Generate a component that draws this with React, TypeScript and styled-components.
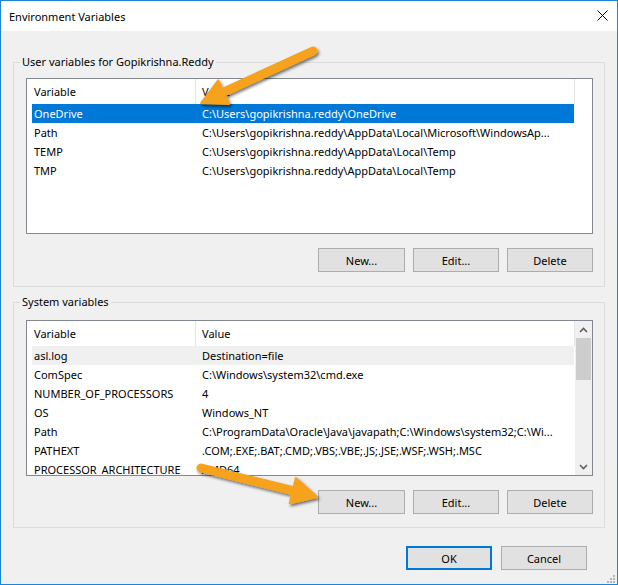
import React from "react";
import styled, { createGlobalStyle } from "styled-components";

const GlobalStyle = createGlobalStyle`
  html, body { margin: 0; padding: 0; background: #ffffff; }
  body { font-family: "Noto Sans", "Open Sans", sans-serif; font-size: 11px; color: #000; }
  * { box-sizing: border-box; }
`;

const Window = styled.div`
  position: relative;
  width: 618px;
  height: 585px;
  border: 1px solid #1c84d6;
  background: #f0f0f0;
  display: flex;
  flex-direction: column;
  overflow: hidden;
`;

const TitleBar = styled.div`
  height: 30px;
  flex-shrink: 0;
  background: #ffffff;
  display: flex;
  align-items: center;
  justify-content: space-between;
  padding: 0 9px 0 8px;
`;

const Title = styled.span`
  font-size: 11px;
  line-height: 16px;
  padding-top: 1px;
`;

const CloseIcon = styled.svg`
  width: 11px;
  height: 11px;
  margin-top: -1px;
`;

const Body = styled.div`
  flex: 1;
  display: flex;
  flex-direction: column;
  padding: 31px 12px 0 12px;
`;

const Group = styled.section<{ $mt: number; $pb: number }>`
  margin-top: ${(p) => p.$mt}px;
  border: 1px solid #dcdcdc;
  padding: 0 11px ${(p) => p.$pb}px 12px;
  display: flex;
  flex-direction: column;
`;

const Legend = styled.span`
  align-self: flex-start;
  margin: -9px 0 0 -6px;
  padding: 0 2px;
  height: 16px;
  line-height: 16px;
  background: #f0f0f0;
`;

const ListBox = styled.div<{ $mt: number; $h: number }>`
  margin-top: ${(p) => p.$mt}px;
  height: ${(p) => p.$h}px;
  border: 1px solid #828790;
  background: #ffffff;
  display: flex;
  overflow: hidden;
`;

const Table = styled.div`
  flex: 1;
  min-width: 0;
  padding-left: 5px;
  display: flex;
  flex-direction: column;
  overflow: hidden;
`;

const HeaderRow = styled.div`
  display: flex;
  height: 25px;
  flex-shrink: 0;
  border-right: 1px solid #e5e5e5;
`;

const HeaderCell = styled.div<{ $first?: boolean }>`
  display: flex;
  align-items: center;
  padding-left: ${(p) => (p.$first ? 2 : 6)}px;
  ${(p) =>
    p.$first
      ? `width: 164px; flex-shrink: 0; border-right: 1px solid #e5e5e5;`
      : `flex: 1;`}
`;

type RowState = "selected" | "inactive" | "normal";

const Row = styled.div<{ $state: RowState }>`
  display: flex;
  height: 19px;
  line-height: 19px;
  flex-shrink: 0;
  margin-right: 1px;
  background: ${(p) =>
    p.$state === "selected" ? "#0078d7" : p.$state === "inactive" ? "#f0f0f0" : "transparent"};
  color: ${(p) => (p.$state === "selected" ? "#ffffff" : "#000000")};
`;

const Cell = styled.div<{ $first?: boolean }>`
  white-space: nowrap;
  overflow: hidden;
  padding-left: ${(p) => (p.$first ? 2 : 6)}px;
  ${(p) => (p.$first ? `width: 164px; flex-shrink: 0;` : `flex: 1; min-width: 0;`)}
`;

const ScrollCol = styled.div<{ $visible: boolean }>`
  width: 17px;
  flex-shrink: 0;
  display: flex;
  flex-direction: column;
  background: ${(p) => (p.$visible ? "#f0f0f0" : "#ffffff")};
`;

const ScrollArrow = styled.div`
  height: 17px;
  flex-shrink: 0;
  display: flex;
  align-items: center;
  justify-content: center;
`;

const Track = styled.div`
  flex: 1;
`;

const Thumb = styled.div`
  height: 42px;
  margin: 0 1px;
  background: #cdcdcd;
`;

const ButtonRow = styled.div<{ $mt: number }>`
  margin-top: ${(p) => p.$mt}px;
  display: flex;
  justify-content: flex-end;
  gap: 8px;
`;

const Button = styled.button<{ $default?: boolean; $w?: number }>`
  width: ${(p) => p.$w ?? 86}px;
  height: 24px;
  padding: 0;
  font-family: inherit;
  font-size: 11px;
  color: #000;
  background: #e1e1e1;
  border: ${(p) => (p.$default ? "2px solid #0078d7" : "1px solid #adadad")};
  border-radius: 0;
`;

const Footer = styled.div`
  margin-top: 18px;
  padding-right: 18px;
  display: flex;
  justify-content: flex-end;
  gap: 9px;
`;

const Grip = styled.svg`
  position: absolute;
  right: 2px;
  bottom: 1px;
  width: 9px;
  height: 9px;
`;

const Overlay = styled.svg`
  position: absolute;
  left: -1px;
  top: -1px;
  width: 618px;
  height: 585px;
  pointer-events: none;
`;

type Item = { name: string; value: string; state?: RowState };

const userVars: Item[] = [
  { name: "OneDrive", value: "C:\\Users\\gopikrishna.reddy\\OneDrive", state: "selected" },
  { name: "Path", value: "C:\\Users\\gopikrishna.reddy\\AppData\\Local\\Microsoft\\WindowsAp..." },
  { name: "TEMP", value: "C:\\Users\\gopikrishna.reddy\\AppData\\Local\\Temp" },
  { name: "TMP", value: "C:\\Users\\gopikrishna.reddy\\AppData\\Local\\Temp" },
];

const systemVars: Item[] = [
  { name: "asl.log", value: "Destination=file", state: "inactive" },
  { name: "ComSpec", value: "C:\\Windows\\system32\\cmd.exe" },
  { name: "NUMBER_OF_PROCESSORS", value: "4" },
  { name: "OS", value: "Windows_NT" },
  { name: "Path", value: "C:\\ProgramData\\Oracle\\Java\\javapath;C:\\Windows\\system32;C:\\Wi..." },
  { name: "PATHEXT", value: ".COM;.EXE;.BAT;.CMD;.VBS;.VBE;.JS;.JSE;.WSF;.WSH;.MSC" },
  { name: "PROCESSOR_ARCHITECTURE", value: "AMD64" },
];

const Chevron = ({ up }: { up: boolean }) => (
  <svg width="9" height="6" viewBox="0 0 9 6">
    <polyline
      points={up ? "1,5 4.5,1.5 8,5" : "1,1 4.5,4.5 8,1"}
      fill="none"
      stroke="#606060"
      strokeWidth="1.6"
    />
  </svg>
);

const VarList = ({ items, mt, h, scroll }: { items: Item[]; mt: number; h: number; scroll: boolean }) => (
  <ListBox $mt={mt} $h={h}>
    <Table>
      <HeaderRow>
        <HeaderCell $first>Variable</HeaderCell>
        <HeaderCell>Value</HeaderCell>
      </HeaderRow>
      {items.map((it) => (
        <Row key={it.name + it.value} $state={it.state ?? "normal"}>
          <Cell $first>{it.name}</Cell>
          <Cell>{it.value}</Cell>
        </Row>
      ))}
    </Table>
    <ScrollCol $visible={scroll}>
      {scroll && (
        <>
          <ScrollArrow>
            <Chevron up />
          </ScrollArrow>
          <Track>
            <Thumb />
          </Track>
          <ScrollArrow>
            <Chevron up={false} />
          </ScrollArrow>
        </>
      )}
    </ScrollCol>
  </ListBox>
);

const Arrow = ({ tail, base, tip, w1, w2 }: { tail: number[]; base: number[]; tip: number[]; w1: number[]; w2: number[] }) => (
  <g filter="url(#arrowShadow)">
    <line x1={tail[0]} y1={tail[1]} x2={base[0]} y2={base[1]} stroke="#f7a21b" strokeWidth="9" strokeLinecap="round" />
    <polygon points={`${tip[0]},${tip[1]} ${w1[0]},${w1[1]} ${w2[0]},${w2[1]}`} fill="#f7a21b" stroke="#f7a21b" strokeWidth="2" strokeLinejoin="round" />
  </g>
);

const ActionButtons = () => (
  <ButtonRow $mt={14}>
    <Button $w={87}>New...</Button>
    <Button>Edit...</Button>
    <Button>Delete</Button>
  </ButtonRow>
);

export default function App() {
  return (
    <>
      <GlobalStyle />
      <Window>
        <TitleBar>
          <Title>Environment Variables</Title>
          <CloseIcon viewBox="0 0 11 11">
            <line x1="0.5" y1="0.5" x2="10.5" y2="10.5" stroke="#000" strokeWidth="1" />
            <line x1="10.5" y1="0.5" x2="0.5" y2="10.5" stroke="#000" strokeWidth="1" />
          </CloseIcon>
        </TitleBar>
        <Body>
          <Group $mt={0} $pb={14}>
            <Legend>User variables for Gopikrishna.Reddy</Legend>
            <VarList items={userVars} mt={8} h={156} scroll={false} />
            <ActionButtons />
          </Group>
          <Group $mt={15} $pb={13}>
            <Legend>System variables</Legend>
            <VarList items={systemVars} mt={10} h={156} scroll />
            <ActionButtons />
          </Group>
          <Footer>
            <Button $default>OK</Button>
            <Button>Cancel</Button>
          </Footer>
        </Body>
        <Grip viewBox="0 0 9 9">
          {[
            [7, 1],
            [4, 4],
            [7, 4],
            [1, 7],
            [4, 7],
            [7, 7],
          ].map(([x, y]) => (
            <rect key={`${x}-${y}`} x={x} y={y} width="2" height="2" fill="#b4b4b4" />
          ))}
        </Grip>
        <Overlay viewBox="0 0 618 585">
          <defs>
            <filter id="arrowShadow" x="-20%" y="-20%" width="140%" height="160%">
              <feDropShadow dx="1.5" dy="2" stdDeviation="1.5" floodColor="#000" floodOpacity="0.55" />
            </filter>
          </defs>
          <Arrow tail={[313, 51]} base={[223.6, 92.1]} tip={[201, 103]} w1={[229, 103.9]} w2={[218.2, 80.3]} />
          <Arrow tail={[201, 468]} base={[292.8, 490.7]} tip={[317, 497]} w1={[289.7, 503.3]} w2={[295.9, 478.1]} />
        </Overlay>
      </Window>
    </>
  );
}
